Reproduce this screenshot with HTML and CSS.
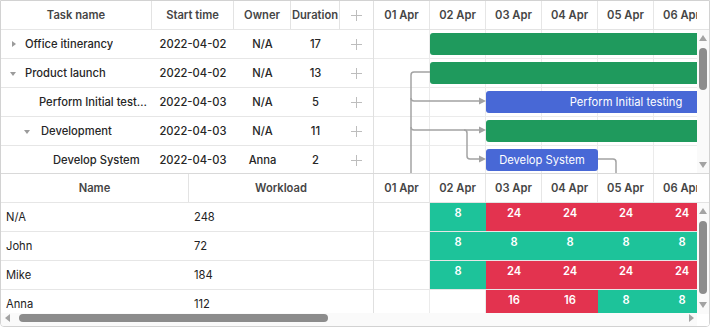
FILE: index.html
```html
<!DOCTYPE html>
<html lang="en">
<head>
	<meta charset="utf-8">
	<title>Gantt - resource load</title>
	<link rel="stylesheet" href="styles.css">
</head>

<body>
	<div id="gantt">
		<!-- tareas -->
		<section class="top">
			<div class="grid">
				<div class="row head">
					<div class="c-name">Task name</div>
					<div class="c-start">Start time</div>
					<div class="c-owner">Owner</div>
					<div class="c-dur">Duration</div>
					<div class="c-add"><span class="add"></span></div>
				</div>
				<div class="row">
					<div class="c-name"><span class="tog"><i class="caret-right"></i></span><span class="txt">Office itinerancy</span></div>
					<div class="c-start">2022-04-02</div>
					<div class="c-owner">N/A</div>
					<div class="c-dur">17</div>
					<div class="c-add"><span class="add"></span></div>
				</div>
				<div class="row">
					<div class="c-name"><span class="tog"><i class="caret-down"></i></span><span class="txt">Product launch</span></div>
					<div class="c-start">2022-04-02</div>
					<div class="c-owner">N/A</div>
					<div class="c-dur">13</div>
					<div class="c-add"><span class="add"></span></div>
				</div>
				<div class="row">
					<div class="c-name"><span class="indent"></span><span class="tog"></span><span class="txt">Perform Initial testing</span></div>
					<div class="c-start">2022-04-03</div>
					<div class="c-owner">N/A</div>
					<div class="c-dur">5</div>
					<div class="c-add"><span class="add"></span></div>
				</div>
				<div class="row">
					<div class="c-name"><span class="indent"></span><span class="tog"><i class="caret-down"></i></span><span class="txt dev">Development</span></div>
					<div class="c-start">2022-04-03</div>
					<div class="c-owner">N/A</div>
					<div class="c-dur">11</div>
					<div class="c-add"><span class="add"></span></div>
				</div>
				<div class="row">
					<div class="c-name"><span class="indent"></span><span class="indent"></span><span class="tog"></span><span class="txt">Develop System</span></div>
					<div class="c-start">2022-04-03</div>
					<div class="c-owner">Anna</div>
					<div class="c-dur">2</div>
					<div class="c-add"><span class="add"></span></div>
				</div>
			</div>

			<div class="chart">
				<div class="chart-head">
					<div class="scale">
						<span>01 Apr</span><span>02 Apr</span><span>03 Apr</span><span>04 Apr</span><span>05 Apr</span><span>06 Apr</span><span>07 Apr</span>
					</div>
					<div class="sb-gap"></div>
				</div>
				<div class="chart-body">
					<div class="viewport">
						<div class="timeline">
							<div class="trow"><div class="bar project" style="margin-left:56px;width:952px"></div></div>
							<div class="trow"><div class="bar project" style="margin-left:56px;width:728px"></div></div>
							<div class="trow"><div class="bar task" style="margin-left:112px;width:280px">Perform Initial testing</div></div>
							<div class="trow"><div class="bar project" style="margin-left:112px;width:616px"></div></div>
							<div class="trow"><div class="bar task" style="margin-left:112px;width:112px">Develop System</div></div>

							<svg class="links" width="320" height="150" viewBox="0 0 320 150">
								<g fill="none" stroke="#a3a3a3" stroke-width="1.5">
									<path d="M56 42 H40 Q37 42 37 45 V68 Q37 71 40 71 H106" />
									<path d="M37 68 V150" />
									<path d="M37 97 Q37 100 40 100 H106" />
									<path d="M90 100 Q93 100 93 103 V126 Q93 129 96 129 H106" />
									<path d="M224 129 H239 Q242 129 242 132 V150" />
								</g>
								<g fill="#a3a3a3">
									<polygon points="105,67.5 112,71 105,74.5" />
									<polygon points="105,96.5 112,100 105,103.5" />
									<polygon points="105,125.5 112,129 105,132.5" />
								</g>
							</svg>
						</div>
					</div>
					<div class="vscroll">
						<div class="sb-btn"><i class="tri-up"></i></div>
						<div class="track"><div class="thumb thumb-tasks"></div></div>
						<div class="sb-btn"><i class="tri-down"></i></div>
					</div>
				</div>
			</div>
		</section>

		<!-- recursos -->
		<section class="bottom">
			<div class="grid">
				<div class="row head">
					<div class="c-res">Name</div>
					<div class="c-load">Workload</div>
				</div>
				<div class="row res"><div class="c-res">N/A</div><div class="c-load">248</div></div>
				<div class="row res"><div class="c-res">John</div><div class="c-load">72</div></div>
				<div class="row res"><div class="c-res">Mike</div><div class="c-load">184</div></div>
				<div class="row res"><div class="c-res">Anna</div><div class="c-load">112</div></div>
			</div>

			<div class="chart">
				<div class="chart-head">
					<div class="scale">
						<span>01 Apr</span><span>02 Apr</span><span>03 Apr</span><span>04 Apr</span><span>05 Apr</span><span>06 Apr</span><span>07 Apr</span>
					</div>
					<div class="sb-gap"></div>
				</div>
				<div class="chart-body">
					<div class="viewport">
						<div class="timeline">
							<div class="lrow">
								<span></span><span class="ok">8</span><span class="over">24</span><span class="over">24</span><span class="over">24</span><span class="over">24</span><span class="over">24</span>
							</div>
							<div class="lrow">
								<span></span><span class="ok">8</span><span class="ok">8</span><span class="ok">8</span><span class="ok">8</span><span class="ok">8</span><span class="ok">8</span>
							</div>
							<div class="lrow">
								<span></span><span class="ok">8</span><span class="over">24</span><span class="over">24</span><span class="over">24</span><span class="over">24</span><span class="over">24</span>
							</div>
							<div class="lrow">
								<span></span><span></span><span class="over">16</span><span class="over">16</span><span class="ok">8</span><span class="ok">8</span><span class="ok">8</span>
							</div>
						</div>
					</div>
					<div class="vscroll">
						<div class="sb-btn"><i class="tri-up"></i></div>
						<div class="track"><div class="thumb thumb-res"></div></div>
						<div class="sb-btn"><i class="tri-down"></i></div>
					</div>
				</div>
			</div>
		</section>

		<div class="hscroll">
			<div class="sb-btn-h"><i class="tri-left"></i></div>
			<div class="track-h"><div class="thumb-h"></div></div>
			<div class="sb-btn-h"><i class="tri-right"></i></div>
			<div class="sb-corner"></div>
		</div>
	</div>
</body>
</html>
```

FILE: styles.css
```css
*{
	margin: 0px;
	padding: 0px;
	box-sizing: border-box;
}
body{
	font-family: Inter, "Noto Sans", sans-serif;
	font-size: 11.2px;
	color: #262626;
	background-color: #FFF;
}
#gantt{
	width: 710px;
	height: 327px;
	border: 1px solid #d2d2d2;
	border-radius: 0px 0px 4px 4px;
	display: flex;
	flex-direction: column;
	overflow: hidden;
}
.top{
	height: 173px;
	display: flex;
	border-bottom: 1px solid #d9d9d9;
	flex: none;
}
.bottom{
	height: 139px;
	display: flex;
	flex: none;
}

/* grid de la izquierda */
.grid{
	width: 373px;
	flex: none;
	border-right: 1px solid #e0e0e0;
	overflow: hidden;
}
.row{
	display: flex;
	height: 29px;
	border-bottom: 1px solid #e6e6e6;
	font-weight: 500;
}
.row > div{
	display: flex;
	align-items: center;
	justify-content: center;
	white-space: nowrap;
	flex: none;
}
.head{
	font-weight: 600;
	color: #454545;
}
.head > div{
	border-right: 1px solid #e3e3e3;
}
.head > div:last-child{
	border-right: none;
}
.c-name{
	width: 151px;
}
.row > .c-name{
	justify-content: flex-start;
	padding: 0px 4px 0px 9px;
}
.head > .c-name{
	justify-content: center;
	padding: 0px;
}
.c-start{
	width: 82px;
}
.c-owner{
	width: 57px;
}
.c-dur{
	width: 49px;
}
.c-add{
	width: 33px;
}
.indent{
	width: 14px;
	flex: none;
}
.tog{
	width: 15px;
	flex: none;
	display: flex;
	align-items: center;
}
.txt{
	overflow: hidden;
	text-overflow: ellipsis;
	min-width: 0;
}
.dev{
	margin-left: 2px;
}
.caret-right{
	margin-left: 2px;
	border-left: 4px solid #9b9b9b;
	border-top: 3.5px solid transparent;
	border-bottom: 3.5px solid transparent;
}
.caret-down{
	margin-top: 1px;
	border-top: 4px solid #9b9b9b;
	border-left: 3.5px solid transparent;
	border-right: 3.5px solid transparent;
}
.add{
	width: 11px;
	height: 11px;
	background:
		linear-gradient(#bdbdbd, #bdbdbd) center / 11px 1px no-repeat,
		linear-gradient(#bdbdbd, #bdbdbd) center / 1px 11px no-repeat;
}

/* grid de recursos */
.c-res{
	width: 188px;
}
.c-load{
	width: 184px;
}
.res{
	font-weight: 400;
	color: #222;
}
.res > .c-res, .res > .c-load{
	justify-content: flex-start;
	padding-left: 5px;
}

/* diagrama */
.chart{
	flex: 1;
	min-width: 0;
	display: flex;
	flex-direction: column;
}
.chart-head{
	height: 29px;
	display: flex;
	flex: none;
	border-bottom: 1px solid #e3e3e3;
}
.scale{
	flex: 1;
	display: flex;
	overflow: hidden;
}
.scale span{
	flex: none;
	width: 56px;
	border-right: 1px solid #e6e6e6;
	text-align: center;
	line-height: 28px;
	font-weight: 600;
	color: #454545;
}
.sb-gap{
	width: 12px;
	flex: none;
}
.chart-body{
	flex: 1;
	min-height: 0;
	display: flex;
}
.viewport{
	flex: 1;
	min-width: 0;
	overflow: hidden;
}
.timeline{
	width: 1120px;
	position: relative;
	background-image: linear-gradient(to right, transparent 55px, #ebebeb 55px);
	background-size: 56px 100%;
}
.trow{
	height: 29px;
	display: flex;
	align-items: center;
	border-bottom: 1px solid #ebebeb;
}
.bar{
	flex: none;
	height: 22px;
	border-radius: 3px;
	color: #FFF;
	text-align: center;
	line-height: 22px;
	white-space: nowrap;
}
.project{
	background-color: #1f9a5d;
}
.task{
	background-color: #4868d6;
}
.links{
	position: absolute;
	top: 0px;
	left: 0px;
}

/* carga de recursos */
.lrow{
	height: 29px;
	display: flex;
	border-bottom: 1px solid #e6e6e6;
}
.lrow span{
	flex: none;
	width: 56px;
	text-align: center;
	line-height: 20px;
	color: #FFF;
	font-weight: 600;
}
.lrow .ok{
	background-color: #1dc39a;
}
.lrow .over{
	background-color: #e3334f;
}

/* barras de scroll */
.vscroll{
	width: 12px;
	flex: none;
	display: flex;
	flex-direction: column;
	background-color: #fafafa;
}
.sb-btn{
	height: 16px;
	flex: none;
	display: flex;
	align-items: center;
	justify-content: center;
}
.track{
	flex: 1;
}
.thumb{
	width: 8px;
	margin: 2px auto 0px auto;
	border-radius: 4px;
	background-color: #8c8c8c;
}
.thumb-tasks{
	height: 42px;
}
.thumb-res{
	height: 73px;
}
.tri-up{
	border-bottom: 6px solid #a3a3a3;
	border-left: 4.5px solid transparent;
	border-right: 4.5px solid transparent;
}
.tri-down{
	border-top: 6px solid #a3a3a3;
	border-left: 4.5px solid transparent;
	border-right: 4.5px solid transparent;
}
.hscroll{
	height: 13px;
	flex: none;
	display: flex;
	background-color: #fafafa;
	padding-top: 1px;
}
.sb-btn-h{
	width: 12px;
	height: 8px;
	flex: none;
	display: flex;
	align-items: center;
	justify-content: center;
}
.track-h{
	flex: 1;
}
.thumb-h{
	width: 309px;
	height: 8px;
	margin-left: 6px;
	border-radius: 4px;
	background-color: #8c8c8c;
}
.tri-left{
	border-right: 5px solid #a3a3a3;
	border-top: 4px solid transparent;
	border-bottom: 4px solid transparent;
}
.tri-right{
	border-left: 5px solid #a3a3a3;
	border-top: 4px solid transparent;
	border-bottom: 4px solid transparent;
}
.sb-corner{
	width: 12px;
	flex: none;
	background-color: #FFF;
}
```
